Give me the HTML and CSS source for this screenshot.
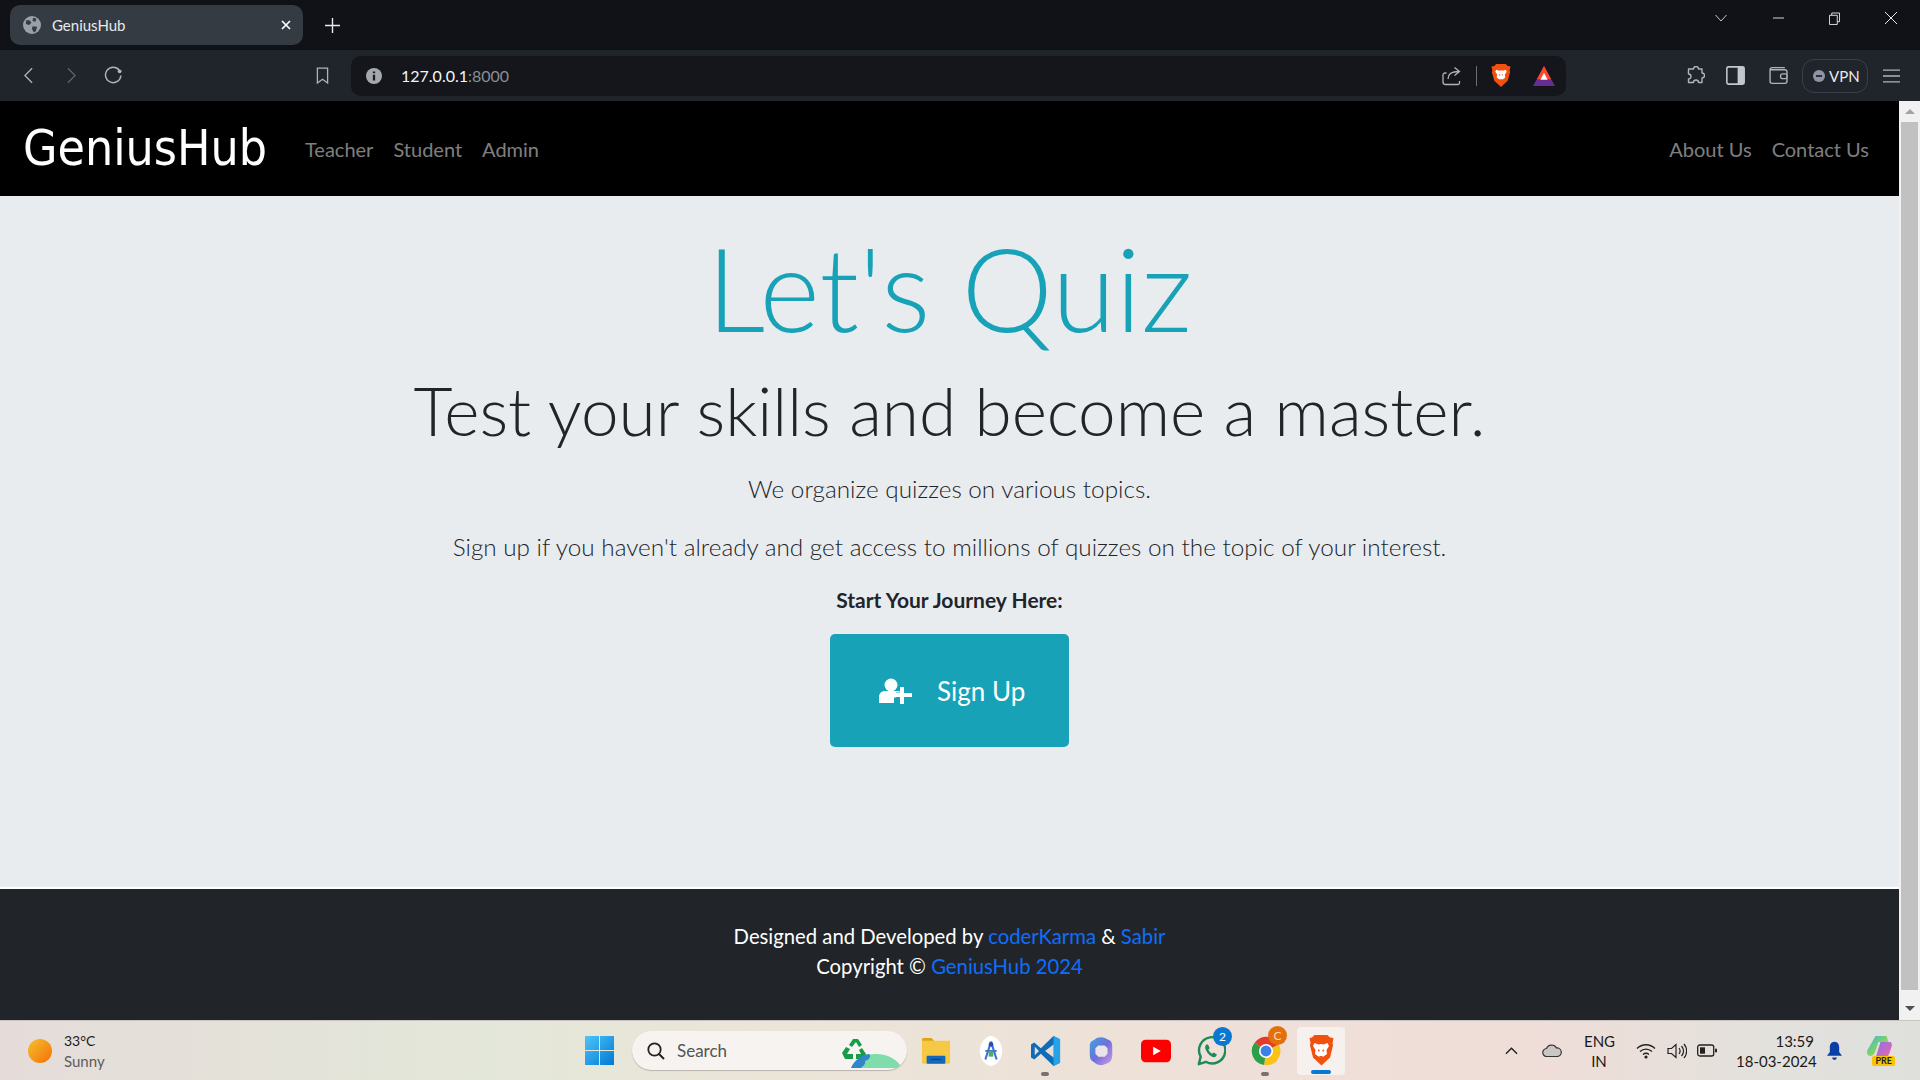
FILE: index.html
```html
<!DOCTYPE html>
<html lang="en">
<head>
  <meta charset="UTF-8" />
  <title>GeniusHub</title>
  <link rel="stylesheet" href="styles.css">
</head>
<body>
  <!-- Browser tabs -->
  <div class="tabstrip">
    <div class="tab">
      <svg class="tab-globe" viewBox="0 0 16 16"><circle cx="8" cy="8" r="8" fill="#9aa0a6"/><path d="M3 3.500l3 .5 1.500 2-2 2-3-1zM9 1.500l3 1-1 2.500-2.500-.5zM8.500 9l4 .5-1 4-2 1-1.500-3z" fill="#343b42"/></svg>
      <span class="tab-title">GeniusHub</span>
      <svg class="tab-close" viewBox="0 0 10 10"><path d="M1 1l8 8M9 1l-8 8" stroke="#fff" stroke-width="1.700"/></svg>
    </div>
    <svg class="tab-new" viewBox="0 0 14 14"><path d="M7 0v14M0 7h14" stroke="#e8eaed" stroke-width="1.300"/></svg>
    <div class="window-btns">
      <svg class="win-chevron" viewBox="0 0 12 8"><path d="M.5 1L6 7l5.500-6" fill="none" stroke="#c5c8cc"/></svg>
      <svg class="win-min" viewBox="0 0 12 2"><path d="M0 1h12" stroke="#e8eaed"/></svg>
      <svg class="win-max" viewBox="0 0 12 14"><path d="M.5 3.500h8.500v10h-8.500zM3 3.500V1h8.500v9.500H9" fill="none" stroke="#e8eaed"/></svg>
      <svg class="win-close" viewBox="0 0 12 12"><path d="M0 0l12 12M12 0L0 12" stroke="#e8eaed"/></svg>
    </div>
  </div>

  <!-- Address bar -->
  <div class="toolbar">
    <svg class="tool-back" viewBox="0 0 10 18"><path d="M9 1L1 9l8 8" fill="none" stroke="#aeb4ba" stroke-width="1.500"/></svg>
    <svg class="tool-forward" viewBox="0 0 10 18"><path d="M1 1l8 8-8 8" fill="none" stroke="#5d6369" stroke-width="1.500"/></svg>
    <svg class="tool-reload" viewBox="0 0 18 18"><path d="M14.500 4A7.300 7.300 0 1 0 16 9" fill="none" stroke="#aeb4ba" stroke-width="1.400"/><circle cx="14.800" cy="5" r="1.800" fill="#aeb4ba"/></svg>
    <svg class="tool-bookmark" viewBox="0 0 14 18"><path d="M1.500 1h11v16l-5.500-4-5.500 4z" fill="none" stroke="#aeb4ba" stroke-width="1.400"/></svg>
    <div class="urlbar">
      <svg class="url-info" viewBox="0 0 14 14"><circle cx="7" cy="7" r="7" fill="#a5a9af"/><path d="M7 6v5M7 3v1.500" stroke="#1a1c20" stroke-width="2"/></svg>
      <span class="url-host">127.0.0.1<span class="url-port">:8000</span></span>
      <svg class="url-share" viewBox="0 0 20 20"><path d="M5.500 7H4a2 2 0 0 0-2 2v7a2.500 2.500 0 0 0 2.500 2.500H17a1.500 1.500 0 0 0 1.500-1.500v-2M7 13c0-5 3-7.500 11-7.500M13.500 1.500l5 4-5 4" fill="none" stroke="#aeb4ba" stroke-width="1.300"/></svg>
      <span class="url-sep"></span>
      <svg class="url-brave" viewBox="0 0 20 24"><path d="M5 0h10l2 2 3 .5-1 4 .5 2-2.500 9-6.500 6-.5.500-.5-.5-6.500-6L.5 8.500l.5-2-1-4L3 2z" fill="#f1500f"/><path d="M5 6l3 1 2-.5 2 .5 3-1 1 2-2 3 .5 3-2.500 2-2 1-2-1-2.500-2 .5-3-2-3z" fill="#fff"/><path d="M8 10.500l1.500 1-1 1zM12 10.500l-1.500 1 1 1zM8.500 16h3L10 18z" fill="#f1500f"/></svg>
      <svg class="url-bat" viewBox="0 0 20 18"><path d="M10 0l10 18H0z" fill="#662d91"/><path d="M10 0l6.500 12h-13z" fill="#ff4724"/><path d="M10 6l3.300 6.500H6.700z" fill="#fff"/></svg>
    </div>
    <svg class="tool-ext" viewBox="0 0 18 20"><path d="M7 3a2.500 2.500 0 0 1 5 0h3.500v4a2.500 2.500 0 0 1 0 5v4.500H12a2.500 2.500 0 0 0-5 0H2V13a2.500 2.500 0 0 0 0-5V3z" fill="none" stroke="#aeb4ba" stroke-width="1.400" stroke-linejoin="round"/></svg>
    <svg class="tool-side" viewBox="0 0 18 18"><rect x=".8" y=".8" width="16.400" height="16.400" rx="1.500" fill="none" stroke="#c3c7cb" stroke-width="1.500"/><rect x="11" y="1" width="6" height="16" fill="#c3c7cb"/></svg>
    <svg class="tool-wallet" viewBox="0 0 18 18"><path d="M15 1.500H3A2 2 0 0 0 1 3.500v11A2 2 0 0 0 3 16.500h12a2 2 0 0 0 2-2v-9a2 2 0 0 0-2-2H1.500" fill="none" stroke="#aeb4ba" stroke-width="1.300"/><rect x="11" y="7.500" width="6" height="4.500" rx="1.500" fill="#20242b" stroke="#aeb4ba" stroke-width="1.300"/></svg>
    <div class="vpn">
      <svg class="vpn-dot" viewBox="0 0 10 10"><circle cx="5" cy="5" r="5" fill="#8f93a8"/><path d="M2.500 5h5" stroke="#20242b" stroke-width="1.500"/></svg>
      <span>VPN</span>
    </div>
    <svg class="tool-menu" viewBox="0 0 16 13"><path d="M0 1h16M0 6.500h16M0 12h16" stroke="#aeb4ba" stroke-width="1.300"/></svg>
  </div>

  <div class="viewport">
    <div class="page">
      <!-- Navigation -->
      <nav class="navbar">
        <a class="brand" href="#home">GeniusHub</a>
        <a class="nav-link" href="#teacher">Teacher</a>
        <a class="nav-link" href="#student">Student</a>
        <a class="nav-link" href="#admin">Admin</a>
        <span class="nav-space"></span>
        <a class="nav-link" href="#about">About Us</a>
        <a class="nav-link" href="#contact">Contact Us</a>
      </nav>

      <!-- Welcome -->
      <main class="hero" id="home">
        <h1 class="hero-title">Let's Quiz</h1>
        <h2 class="hero-sub">Test your skills and become a master.</h2>
        <p class="hero-lead hero-lead-first">We organize quizzes on various topics.</p>
        <p class="hero-lead">Sign up if you haven't already and get access to millions of quizzes on the topic of your interest.</p>
        <p class="hero-start">Start Your Journey Here:</p>
        <a class="signup" href="#signup">
          <svg class="signup-icon" viewBox="0 0 34 26"><circle cx="13" cy="7" r="6.500" fill="#fff"/><path d="M1 25v-6c0-4 3-6 6-6h12c2 0 3 .5 4 1.500h-5v5h-2v5.500z" fill="#fff"/><path d="M21 8h4v6h8v4h-8v7h-4v-7h-6v-4h6z" fill="#fff" transform="translate(1 1)"/></svg>
          <span>Sign Up</span>
        </a>
      </main>

      <footer class="site-footer">
        <p>Designed and Developed by <a href="#coderkarma">coderKarma</a> &amp; <a href="#sabir">Sabir</a></p>
        <p>Copyright &copy; <a href="#home">GeniusHub 2024</a></p>
      </footer>
    </div>
    <div class="scrollbar">
      <span class="scroll-up"></span>
      <span class="scroll-thumb"></span>
      <span class="scroll-down"></span>
    </div>
  </div>

  <!-- Windows taskbar -->
  <div class="taskbar">
    <div class="weather">
      <span class="weather-sun"></span>
      <div class="weather-text">
        <div class="weather-temp">33°C</div>
        <div class="weather-desc">Sunny</div>
      </div>
    </div>
    <div class="task-center">
      <svg class="win-logo" viewBox="0 0 30 30"><defs><linearGradient id="winblue" x1="0" y1="0" x2="1" y2="1"><stop offset="0" stop-color="#4fc5f7"/><stop offset="1" stop-color="#0078d4"/></linearGradient></defs><path d="M0 0h14.500v14.500H0zM15.500 0H30v14.500H15.500zM0 15.500h14.500V30H0zM15.500 15.500H30V30H15.500z" fill="url(#winblue)"/></svg>
      <div class="search">
        <svg class="search-icon" viewBox="0 0 18 18"><circle cx="7.500" cy="7.500" r="6.200" fill="none" stroke="#222" stroke-width="1.800"/><path d="M12 12l5 5" stroke="#222" stroke-width="2"/></svg>
        <span class="search-text">Search</span>
        <svg class="search-art" viewBox="0 0 60 30"><path d="M7 7l4-6h5l4 6-3 2-3-5-4 5zM0 15l4-6 4 2-3 5h6v5H3zM20 10l4 6-3 5h-7v-5h5l-2-4z" fill="#1a9b4b"/><path d="M9 30c3-8 12-14 25-14 12 0 22 6 26 14z" fill="#7fdcab"/><path d="M9 30c3-7 10-13 18-14 3 3-1 6-4 7 1 3-2 5-4 7z" fill="#2f86c9"/></svg>
      </div>
      <svg class="app app-first" viewBox="0 0 32 32"><path d="M1 4a2 2 0 0 1 2-2h8l3 3h17v23a1.500 1.500 0 0 1-1.500 1.500h-27A1.500 1.500 0 0 1 1 28z" fill="#f6c945"/><path d="M1 4a2 2 0 0 1 2-2h8l3 3h-13z" fill="#e0a30f"/><rect x="6" y="21" width="20" height="8.500" rx="1" fill="#1366b8"/><path d="M11 25h10" stroke="#0a3d73" stroke-width="1"/></svg>
      <svg class="app" viewBox="0 0 32 32"><path d="M16 0c5 0 12 7 12 16s-7 16-12 16S4 25 4 16 11 0 16 0z" fill="#fff"/><path d="M16 6l-6 19M16 6l6 19" stroke="#3c70d8" stroke-width="2.200" fill="none"/><path d="M10 16h12" stroke="#3c70d8" stroke-width="2"/><circle cx="16" cy="9" r="2.500" fill="#2b4fa8"/><rect x="13.500" y="16" width="5" height="6" fill="#4fae5b"/></svg>
      <div class="app-wrap">
        <svg class="app" viewBox="0 0 32 32"><path d="M24 0l7 3.500v25L24 32 10.500 19 3.500 25 0 23V9l3.500-2 7 6z" fill="#0f6cb8"/><path d="M24 0l7 3.500v25L24 32z" fill="#25a3e8"/><path d="M24 9l-9 7 9 7z" fill="#e9ddd6"/><path d="M4 11.500L8.500 16 4 20.500z" fill="#e9ddd6"/></svg>
        <span class="app-dot"></span>
      </div>
      <svg class="app" viewBox="0 0 32 32"><defs><linearGradient id="copilot" x1="0" y1="0" x2="1" y2="1"><stop offset="0" stop-color="#3aa6e0"/><stop offset=".5" stop-color="#6f6fdc"/><stop offset="1" stop-color="#d69adf"/></linearGradient></defs><path d="M9 4c3-3 8-3 11-2l6 3c2 2 2 5 2 8v8c0 4-2 7-5 8l-5 2c-3 .5-6-.5-8-2l-4-3c-2-2-2-5-2-8v-8c0-2 1-4 3-5z" fill="url(#copilot)"/><path d="M13 10h7l3 3v6l-3 3h-7l-3-3v-6z" fill="#e9e4e8"/></svg>
      <svg class="app" viewBox="0 0 32 24"><rect y="0" width="32" height="24" rx="5" fill="#f00"/><path d="M13 7.500l8 4.500-8 4.500z" fill="#fff"/></svg>
      <div class="app-wrap">
        <svg class="app" viewBox="0 0 32 32"><path d="M3 30l2-8a14 14 0 1 1 5.500 5.500z" fill="none" stroke="#1f8a57" stroke-width="2.600" stroke-linejoin="round"/><path d="M11 9c-2 2-1.500 5 1 8.500s6 5.500 8.500 5l2-2.500-3.500-2.500-1.800 1.500c-1.500-.5-3.500-2.700-4-4.500l1.500-1.500L12.800 9z" fill="#1f8a57"/></svg>
        <span class="app-badge">2</span>
      </div>
      <div class="app-wrap">
        <svg class="app" viewBox="0 0 32 32"><path d="M16 16L4 7a15 15 0 0 1 25.500 2z" fill="#e33b2e"/><path d="M16 16L29.500 9a15 15 0 0 1-15.500 22z" fill="#fbc116"/><path d="M16 16L14 31A15 15 0 0 1 4 7z" fill="#2d9f48"/><circle cx="16" cy="16" r="7.500" fill="#fff"/><circle cx="16" cy="16" r="5.800" fill="#3f7fe8"/></svg>
        <span class="app-badge app-badge-orange">C</span>
        <span class="app-dot"></span>
      </div>
      <div class="app-active">
        <svg class="app" viewBox="0 0 26 32"><path d="M6.500 0h13l2.500 2.500 3.500.5-1 5 .5 2.500-3 12-8 7.500-.5.500-.5-.5-8-7.500-3-12 .5-2.500-1-5L4 2.500z" fill="#f1500f"/><path d="M6.500 8l4 1.500 2.500-.5 2.500.5 4-1.500 1.500 3-2.500 4 .5 4-3.500 2.500-2.500 1.500-2.500-1.500L7 19l.5-4L5 11z" fill="#fff"/><path d="M10 14l2 1.500-1.500 1.500zM16 14l-2 1.500 1.500 1.500zM11 21h4l-2 3z" fill="#f1500f"/></svg>
        <span class="app-bar"></span>
      </div>
    </div>
    <div class="tray">
      <svg class="tray-up" viewBox="0 0 14 8"><path d="M1 7l6-6 6 6" fill="none" stroke="#222" stroke-width="1.500"/></svg>
      <svg class="tray-cloud" viewBox="0 0 20 13"><path d="M5 12.500a4 4 0 0 1-.5-8A5.500 5.500 0 0 1 14.500 4a4.200 4.200 0 0 1 1 8.500z" fill="#c9c6c4" stroke="#333" stroke-width="1.200"/></svg>
      <div class="tray-lang">ENG<br>IN</div>
      <svg class="tray-wifi" viewBox="0 0 20 16"><path d="M1 5.500c5-5 13-5 18 0M4 8.500c3.500-3.300 8.500-3.300 12 0M7 11.500c1.800-1.500 4.200-1.500 6 0" fill="none" stroke="#222" stroke-width="1.300"/><circle cx="10" cy="14" r="1.600" fill="#222"/></svg>
      <svg class="tray-sound" viewBox="0 0 20 16"><path d="M1 5.500h3.500L9 1.500v13l-4.500-4H1z" fill="none" stroke="#222" stroke-width="1.200"/><path d="M12 5c1.500 2 1.500 4 0 6M14.500 3c2.500 3 2.500 7 0 10M17 1c3.500 4 3.500 10 0 14" fill="none" stroke="#222" stroke-width="1.200"/></svg>
      <svg class="tray-battery" viewBox="0 0 20 13"><rect x=".7" y="1" width="16" height="11" rx="2" fill="none" stroke="#222" stroke-width="1.300"/><rect x="3" y="3.300" width="5" height="6.400" fill="#222"/><rect x="18" y="4.500" width="2" height="4" rx="1" fill="#222"/></svg>
      <div class="tray-clock">13:59<br>18-03-2024</div>
      <svg class="tray-bell" viewBox="0 0 16 20"><path d="M8 0c3.500 0 5 3 5 6v5l3 4H0l3-4V6c0-3 1.500-6 5-6z" fill="#0a3fa8"/><path d="M5.500 17h5a2.500 2.500 0 0 1-5 0z" fill="#0a3fa8"/></svg>
      <div class="tray-copilot">
        <svg class="copilot-mark" viewBox="0 0 26 24"><defs><linearGradient id="pre" x1="0" y1="0" x2="1" y2="1"><stop offset="0" stop-color="#38b6e8"/><stop offset=".5" stop-color="#7bd16b"/><stop offset="1" stop-color="#f0d048"/></linearGradient><linearGradient id="pre2" x1="0" y1="0" x2="1" y2="1"><stop offset="0" stop-color="#8a6ef0"/><stop offset="1" stop-color="#f06aa0"/></linearGradient></defs><path d="M9 0h11l2 6H12l-3 9c-1 3-3 5-5 5-3 0-4-3-3-6z" fill="url(#pre)"/><path d="M14 6h9c2 0 3 2 2 5l-2 6c-1 3-3 5-6 5h-8z" fill="url(#pre2)"/></svg>
        <span class="copilot-pre">PRE</span>
      </div>
    </div>
  </div>
</body>
</html>
```

FILE: styles.css
```css
* {
  box-sizing: border-box;
}

html, body {
  height: 100%;
}

body {
  margin: 0;
  width: 1920px;
  height: 1080px;
  overflow: hidden;
  display: flex;
  flex-direction: column;
  font-family: Lato, "Open Sans", sans-serif;
}

svg {
  display: block;
  flex: none;
}

a {
  text-decoration: none;
}

p {
  margin: 0;
}

/* Browser chrome */
.tabstrip {
  height: 50px;
  background: #101218;
  display: flex;
  align-items: flex-start;
  padding: 5px 0 0 10px;
}

.tab {
  width: 293px;
  height: 40px;
  background: #343b42;
  border-radius: 10px;
  display: flex;
  align-items: center;
  padding: 0 12px 0 13px;
  color: #e8eaed;
  font-size: 15px;
}

.tab-globe {
  width: 18px;
  height: 18px;
  margin-right: 11px;
}

.tab-title {
  flex: 1;
}

.tab-close {
  width: 10px;
  height: 10px;
}

.tab-new {
  width: 15px;
  height: 15px;
  margin: 13px 0 0 22px;
}

.window-btns {
  margin-left: auto;
  display: flex;
  align-items: center;
  height: 26px;
  padding-right: 23px;
}

.win-chevron {
  width: 12px;
  height: 8px;
  margin-right: 46px;
}

.win-min {
  width: 11px;
  height: 2px;
  margin-right: 45px;
}

.win-max {
  width: 11px;
  height: 13px;
  margin-right: 45px;
}

.win-close {
  width: 12px;
  height: 12px;
}

.toolbar {
  height: 51px;
  background: #20242b;
  display: flex;
  align-items: center;
  padding-left: 24px;
}

.tool-back {
  width: 9px;
  height: 17px;
}

.tool-forward {
  width: 9px;
  height: 17px;
  margin-left: 34px;
}

.tool-reload {
  width: 19px;
  height: 19px;
  margin-left: 28px;
}

.tool-bookmark {
  width: 13px;
  height: 19px;
  margin-left: 193px;
}

.urlbar {
  width: 1215px;
  height: 40px;
  margin-left: 22px;
  background: #14161b;
  border-radius: 10px;
  display: flex;
  align-items: center;
  padding-left: 15px;
}

.url-info {
  width: 16px;
  height: 16px;
}

.url-host {
  margin-left: 19px;
  color: #f5f6f7;
  font-size: 16px;
  flex: 1;
}

.url-port {
  color: #8a8f95;
}

.url-share {
  width: 20px;
  height: 20px;
}

.url-sep {
  width: 1px;
  height: 20px;
  background: #6c7076;
  margin: 0 14px 0 15px;
}

.url-brave {
  width: 20px;
  height: 23px;
}

.url-bat {
  width: 22px;
  height: 20px;
  margin: 0 11px 0 22px;
}

.tool-ext {
  width: 19px;
  height: 20px;
  margin-left: 120px;
}

.tool-side {
  width: 19px;
  height: 19px;
  margin-left: 21px;
}

.tool-wallet {
  width: 19px;
  height: 19px;
  margin-left: 24px;
}

.vpn {
  width: 66px;
  height: 34px;
  margin-left: 14px;
  border: 1px solid #3b414a;
  border-radius: 12px;
  display: flex;
  align-items: center;
  padding-left: 10px;
  color: #e8eaed;
  font-size: 15px;
}

.vpn-dot {
  width: 12px;
  height: 12px;
  margin-right: 4px;
}

.tool-menu {
  width: 17px;
  height: 14px;
  margin-left: 15px;
}

/* Page */
.viewport {
  flex: 1;
  display: flex;
  min-height: 0;
}

.page {
  flex: 1;
  display: flex;
  flex-direction: column;
  min-width: 0;
}

.navbar {
  height: 95px;
  background: #000;
  display: flex;
  align-items: center;
  padding: 0 20px 0 23px;
}

.brand {
  color: #fff;
  font-family: "DejaVu Sans", sans-serif;
  font-stretch: condensed;
  font-size: 49.500px;
  line-height: 1;
  margin-right: 28px;
}

.nav-link {
  color: rgba(255, 255, 255, 0.5);
  font-size: 20px;
  padding: 0 10px;
}

.nav-space {
  flex: 1;
}

.hero {
  flex: 1;
  background: #e9ecef;
  text-align: center;
  display: flex;
  flex-direction: column;
  align-items: center;
  color: #212529;
}

.hero-title {
  margin: 23px 0 0;
  color: #17a2b8;
  font-size: 115.500px;
  font-weight: 300;
  line-height: 1.2;
}

.hero-sub {
  margin: 11px 0 0;
  font-size: 67.500px;
  font-weight: 300;
  line-height: 1.2;
}

.hero-lead {
  font-size: 24.300px;
  font-weight: 300;
  line-height: 1.5;
  margin-top: 22px;
}

.hero-lead-first {
  margin-top: 21px;
}

.hero-start {
  font-size: 21px;
  font-weight: 700;
  margin-top: 22px;
}

.signup {
  width: 239px;
  height: 113px;
  margin-top: 22px;
  background: #17a2b8;
  border-radius: 5px;
  color: #fff;
  font-size: 26px;
  display: flex;
  align-items: center;
  padding-left: 48px;
}

.signup-icon {
  width: 34px;
  height: 26px;
  margin-right: 25px;
}

.site-footer {
  height: 133px;
  border-top: 2px solid #fff;
  background: #212529;
  color: #fff;
  font-size: 20.300px;
  line-height: 30px;
  text-align: center;
  padding-top: 32px;
}

.site-footer a {
  color: #0d6efd;
}

.scrollbar {
  width: 21px;
  background: #f1f1f1;
  display: flex;
  flex-direction: column;
  align-items: center;
  padding: 8px 2px 9px;
}

.scroll-up {
  border: 5px solid transparent;
  border-top: 0;
  border-bottom: 5px solid #a3a3a3;
}

.scroll-thumb {
  width: 17px;
  flex: 1;
  margin: 8px 0 16px;
  background: #c1c1c1;
}

.scroll-down {
  border: 5px solid transparent;
  border-bottom: 0;
  border-top: 5px solid #505050;
}

/* Windows taskbar */
.taskbar {
  height: 60px;
  border-top: 1px solid #c8c3be;
  background: linear-gradient(90deg, #e5dcd9 0%, #e3e7d9 25%, #ebe5d8 40%, #efdfd8 70%, #efddd8 80%, #e3e1dc 92%, #dfe0dc 100%);
  display: flex;
  align-items: center;
}

.weather {
  display: flex;
  align-items: center;
  padding-left: 28px;
  width: 585px;
}

.weather-sun {
  width: 24px;
  height: 24px;
  border-radius: 50%;
  background: linear-gradient(135deg, #f4c22b, #f46f0a);
  margin-right: 12px;
}

.weather-temp {
  font-size: 14px;
  line-height: 20px;
  color: #1a1a1a;
}

.weather-desc {
  font-size: 15px;
  line-height: 20px;
  color: #5c5c5c;
}

.task-center {
  display: flex;
  align-items: center;
}

.win-logo {
  width: 29px;
  height: 29px;
}

.search {
  width: 275px;
  height: 39px;
  margin-left: 18px;
  background: #f6f3f1;
  border-radius: 20px;
  box-shadow: 0 1px 1px #b9b3ae;
  display: flex;
  align-items: center;
  padding-left: 15px;
  position: relative;
  overflow: hidden;
}

.search-icon {
  width: 18px;
  height: 18px;
}

.search-text {
  margin-left: 12px;
  font-size: 17px;
  color: #555;
}

.search-art {
  position: absolute;
  right: 5px;
  bottom: 2px;
  width: 60px;
  height: 30px;
}

.app {
  width: 30px;
  height: 30px;
  margin-left: 25px;
}

.app-first {
  margin-left: 14px;
}

.app-wrap {
  position: relative;
}

.app-dot {
  position: absolute;
  left: 35px;
  bottom: -10px;
  width: 8px;
  height: 4px;
  border-radius: 2px;
  background: #77726f;
}

.app-badge {
  position: absolute;
  left: 42px;
  top: -9px;
  width: 19px;
  height: 19px;
  border-radius: 50%;
  background: #0a78d2;
  color: #fff;
  font-size: 12px;
  line-height: 19px;
  text-align: center;
}

.app-badge-orange {
  background: #e56f0a;
  color: #f8d9b8;
  top: -10px;
}

.app-active {
  width: 48px;
  height: 48px;
  margin-left: 16px;
  background: #f6f1ee;
  border-radius: 4px;
  display: flex;
  justify-content: center;
  padding-top: 8px;
  position: relative;
}

.app-active .app {
  margin-left: 0;
  width: 26px;
  height: 32px;
}

.app-bar {
  position: absolute;
  left: 14px;
  bottom: 1px;
  width: 20px;
  height: 4px;
  border-radius: 2px;
  background: #0a78d2;
}

.tray {
  margin-left: auto;
  display: flex;
  align-items: center;
  color: #1a1a1a;
}

.tray-up {
  width: 13px;
  height: 8px;
}

.tray-cloud {
  width: 20px;
  height: 13px;
  margin-left: 24px;
}

.tray-lang {
  margin-left: 22px;
  width: 30px;
  font-size: 15px;
  line-height: 20px;
  text-align: center;
}

.tray-wifi {
  width: 20px;
  height: 16px;
  margin-left: 22px;
}

.tray-sound {
  width: 20px;
  height: 16px;
  margin-left: 11px;
}

.tray-battery {
  width: 20px;
  height: 13px;
  margin-left: 10px;
}

.tray-clock {
  margin-left: 19px;
  font-size: 15px;
  line-height: 20px;
  text-align: right;
  width: 78px;
  white-space: nowrap;
}

.tray-bell {
  width: 15px;
  height: 20px;
  margin-left: 13px;
}

.tray-copilot {
  position: relative;
  width: 29px;
  height: 30px;
  margin: 0 26px 0 23px;
}

.copilot-mark {
  width: 29px;
  height: 24px;
}

.copilot-pre {
  position: absolute;
  right: -1px;
  bottom: 0;
  background: #f7c600;
  color: #222;
  font-size: 9px;
  font-weight: 700;
  line-height: 10px;
  padding: 0 3px;
  border-radius: 2px;
}
```
